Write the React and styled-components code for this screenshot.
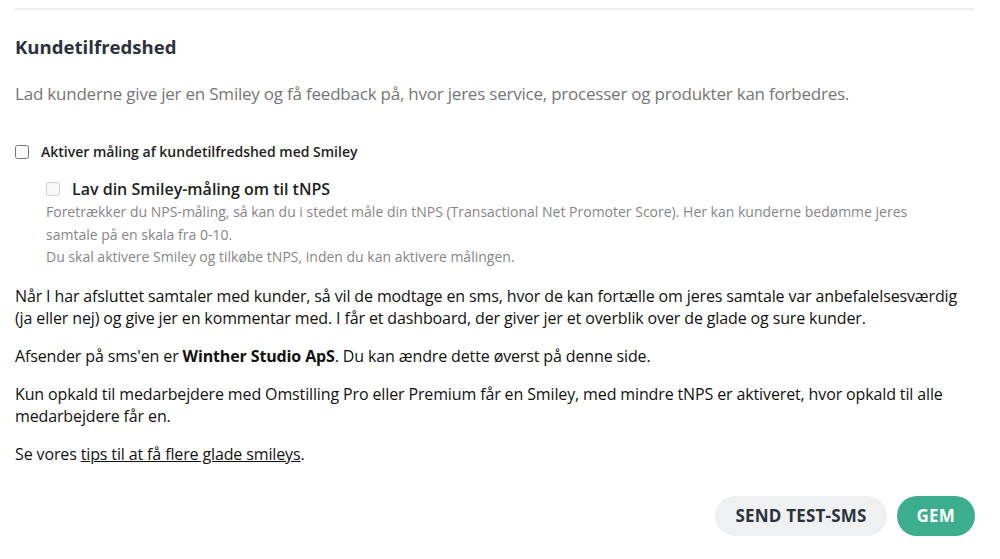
import React from "react";
import styled, { createGlobalStyle } from "styled-components";

const GlobalStyle = createGlobalStyle`
  html, body {
    margin: 0;
    padding: 0;
    background: #ffffff;
  }
  body {
    font-family: "Open Sans", "Noto Sans", "Liberation Sans", sans-serif;
    color: #1a1a1a;
  }
`;

export default function App() {
  return (
    <>
      <GlobalStyle />
      <Page>
        <Divider />
        <Title>Kundetilfredshed</Title>
        <Lead>
          Lad kunderne give jer en Smiley og få feedback på, hvor jeres service,
          processer og produkter kan forbedres.
        </Lead>

        <Option $top="36px">
          <Box type="checkbox" />
          <OptionLabel>Aktiver måling af kundetilfredshed med Smiley</OptionLabel>
        </Option>

        <SubOption>
          <Option>
            <Box type="checkbox" disabled />
            <OptionLabel $size="16px">Lav din Smiley-måling om til tNPS</OptionLabel>
          </Option>
          <Hint>
            Foretrækker du NPS-måling, så kan du i stedet måle din tNPS
            (Transactional Net Promoter Score). Her kan kunderne bedømme jeres
            samtale på en skala fra 0-10.
            <br />
            Du skal aktivere Smiley og tilkøbe tNPS, inden du kan aktivere målingen.
          </Hint>
        </SubOption>

        <Text>
          <p>
            Når I har afsluttet samtaler med kunder, så vil de modtage en sms, hvor
            de kan fortælle om jeres samtale var anbefalelsesværdig (ja eller nej)
            og give jer en kommentar med. I får et dashboard, der giver jer et
            overblik over de glade og sure kunder.
          </p>
          <p>
            Afsender på sms'en er <strong>Winther Studio ApS</strong>. Du kan ændre
            dette øverst på denne side.
          </p>
          <p>
            Kun opkald til medarbejdere med Omstilling Pro eller Premium får en
            Smiley, med mindre tNPS er aktiveret, hvor opkald til alle medarbejdere
            får en.
          </p>
          <p>
            Se vores <a href="#tips">tips til at få flere glade smileys</a>.
          </p>
        </Text>

        <Actions>
          <Button>SEND TEST-SMS</Button>
          <Button $primary>GEM</Button>
        </Actions>
      </Page>
    </>
  );
}

const Page = styled.div`
  padding: 8px 25px 0 15px;
  display: flex;
  flex-direction: column;
`;

const Divider = styled.hr`
  margin: 0;
  border: none;
  border-top: 2px solid #eeeeee;
`;

const Title = styled.h2`
  margin: 25px 0 0;
  font-size: 18.6px;
  line-height: 24px;
  font-weight: 700;
  color: #2b323b;
`;

const Lead = styled.p`
  margin: 23px 0 0;
  font-size: 17px;
  letter-spacing: -0.22px;
  line-height: 24px;
  color: #767676;
`;

const Option = styled.label`
  display: flex;
  align-items: center;
  gap: 12px;
  margin-top: ${(p) => p.$top || 0};
`;

const Box = styled.input`
  margin: 0;
  width: 14px;
  height: 14px;
  accent-color: #3bae8d;
`;

const OptionLabel = styled.span`
  font-size: ${(p) => p.$size || "14px"};
  line-height: 20px;
  font-weight: 600;
  color: #1e1e1e;
`;

const SubOption = styled.div`
  margin: 17px 0 0 31px;
  display: flex;
  flex-direction: column;
`;

const Hint = styled.p`
  margin: 2px 0 0;
  max-width: 885px;
  font-size: 14px;
  line-height: 22.5px;
  color: #868686;
`;

const Text = styled.div`
  margin-top: 16px;
  font-size: 16px;
  letter-spacing: -0.13px;
  line-height: 22px;
  color: #111111;
  p {
    margin: 0 0 16px;
  }
  strong {
    font-weight: 700;
  }
  a {
    color: inherit;
    text-decoration: underline;
  }
`;

const Actions = styled.div`
  display: flex;
  justify-content: flex-end;
  gap: 10px;
  margin-top: 15px;
`;

const Button = styled.button`
  height: 40px;
  padding: 0 20px;
  border: none;
  border-radius: 20px;
  font-family: inherit;
  font-size: 17px;
  letter-spacing: 0.2px;
  font-weight: 700;
  cursor: pointer;
  background: ${(p) => (p.$primary ? "#3bae8d" : "#eff0f2")};
  color: ${(p) => (p.$primary ? "#ffffff" : "#2b323b")};
`;
